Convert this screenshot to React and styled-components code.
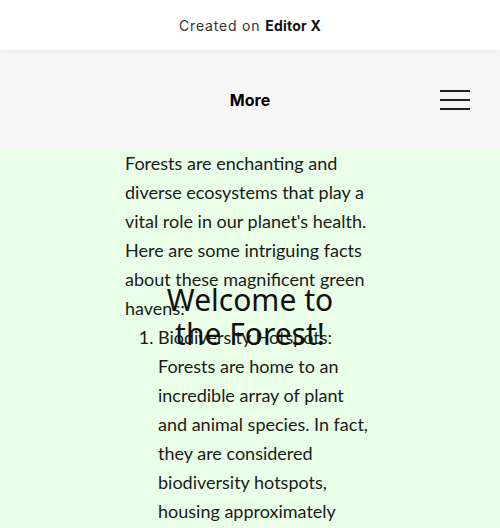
import styled, { createGlobalStyle } from "styled-components";

const Global = createGlobalStyle`
  body {
    margin: 0;
    background: #eaffe7;
    font-family: "Lato", "Liberation Sans", sans-serif;
    overflow: hidden;
  }
`;

const Page = styled.div`
  width: 500px;
  height: 528px;
  overflow: hidden;
  background: #eaffe7;
`;

const TopBar = styled.div`
  height: 50px;
  background: #ffffff;
  display: flex;
  align-items: center;
  justify-content: center;
  font-family: "Inter", "Liberation Sans", sans-serif;
  font-size: 14px;
  letter-spacing: 0.8px;
  color: #333;
  box-shadow: 0 1px 6px rgba(0, 0, 0, 0.06);
  position: relative;
  z-index: 1;

  b {
    margin-left: 5px;
    font-weight: 700;
    color: #111;
    letter-spacing: 0.2px;
  }
`;

const Header = styled.header`
  height: 100px;
  background: #f6f6f6;
  display: grid;
  grid-template-columns: 1fr auto 1fr;
  align-items: center;
  padding: 0 30px;
`;

const NavLabel = styled.div`
  grid-column: 2;
  font-family: "Inter", "Liberation Sans", sans-serif;
  font-weight: 700;
  font-size: 16px;
  color: #000;
`;

const Burger = styled.div`
  justify-self: end;
  display: flex;
  flex-direction: column;
  gap: 7px;
  width: 30px;

  span {
    height: 2px;
    background: #222;
  }
`;

const Main = styled.main`
  position: relative;
  width: 250px;
  margin: -1px auto 0;
  font-size: 18px;
  line-height: 29px;
  color: #1a1a1a;
  font-weight: 400;
`;

const Intro = styled.p`
  margin: 0;
`;

const List = styled.ol`
  margin: 0;
  padding-left: 33px;
`;

const Title = styled.h1`
  position: absolute;
  top: 134px;
  left: 0;
  right: 0;
  margin: 0;
  text-align: center;
  font-family: "Noto Sans", "Liberation Sans", sans-serif;
  font-weight: 400;
  font-size: 30px;
  line-height: 34px;
  color: #111;
`;

export default function App() {
  return (
    <Page>
      <Global />
      <TopBar>
        Created on<b>Editor X</b>
      </TopBar>
      <Header>
        <NavLabel>More</NavLabel>
        <Burger>
          <span />
          <span />
          <span />
        </Burger>
      </Header>
      <Main>
        <Intro>
          Forests are enchanting and diverse ecosystems that play a vital role in
          our planet's health. Here are some intriguing facts about these
          magnificent green havens:
        </Intro>
        <List>
          <li>
            Biodiversity Hotspots: Forests are home to an incredible array of
            plant and animal species. In fact, they are considered biodiversity
            hotspots, housing approximately 80% of the world's terrestrial
            biodiversity.
          </li>
        </List>
        <Title>
          Welcome to
          <br />
          the Forest!
        </Title>
      </Main>
    </Page>
  );
}
